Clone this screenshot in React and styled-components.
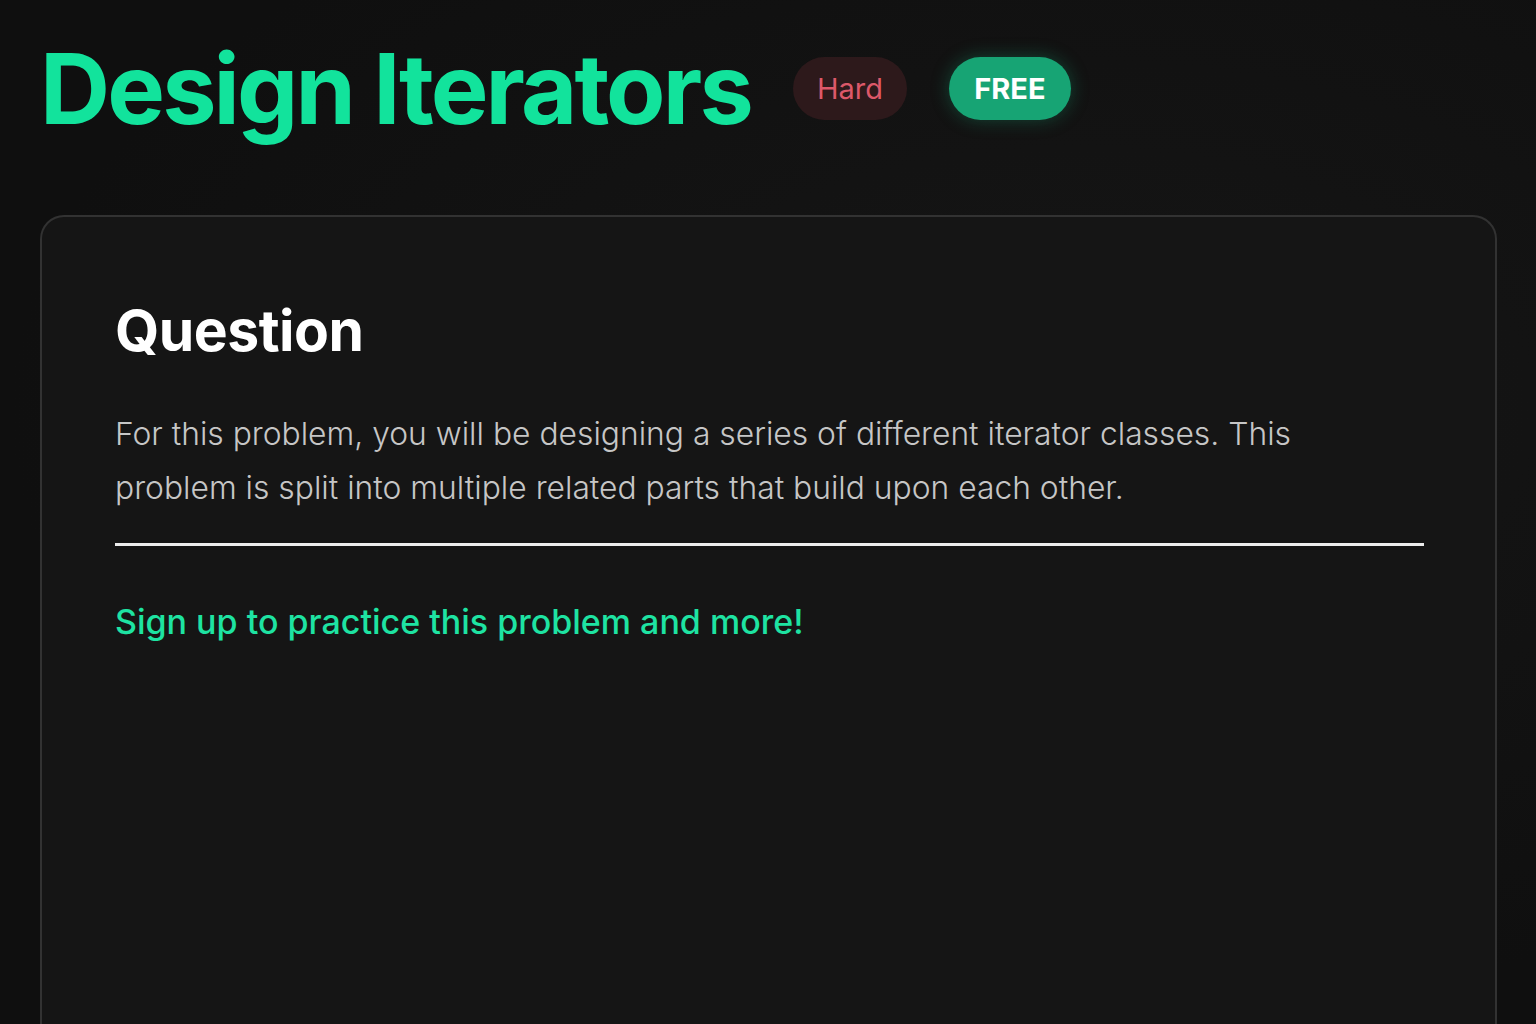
import React from "react";
import styled, { createGlobalStyle } from "styled-components";

const GlobalStyle = createGlobalStyle`
  html, body {
    margin: 0;
    padding: 0;
    background: #0f0f0f;
    font-family: Inter, "Noto Sans", "Liberation Sans", sans-serif;
  }
`;

const Page = styled.div`
  height: 1024px;
  overflow: hidden;
  padding: 30px 39px 0 40px;
  box-sizing: border-box;
  background: radial-gradient(ellipse at 70% 40%, #161616 0%, #0f0f0f 70%);
`;

const Header = styled.div`
  display: flex;
  align-items: center;
  gap: 42px;
  height: 116px;
`;

const Title = styled.h1`
  margin: 0;
  font-size: 97px;
  font-weight: 700;
  letter-spacing: -2.85px;
  color: #12e39c;
  line-height: 1;
`;

const Badge = styled.span`
  display: inline-flex;
  align-items: center;
  justify-content: center;
  box-sizing: border-box;
  height: 63px;
  width: ${(p) => p.$width}px;
  border-radius: 32px;
  font-size: 29px;
  font-weight: ${(p) => p.$weight};
  color: ${(p) => p.$color};
  background: ${(p) => p.$bg};
  box-shadow: ${(p) => p.$glow || "none"};
`;

const Badges = styled.div`
  display: flex;
  align-items: center;
  gap: 42px;
`;

const Card = styled.section`
  margin-top: 69px;
  min-height: 900px;
  border: 2px solid #323232;
  border-bottom: none;
  border-radius: 24px 24px 0 0;
  background: #151515;
  padding: 80px 71px 0 73px;
`;

const Heading = styled.h2`
  margin: 0;
  font-size: 57px;
  font-weight: 700;
  color: #ffffff;
  line-height: 1.2;
  letter-spacing: -0.5px;
`;

const Body = styled.p`
  margin: 42px 0 0;
  font-size: 31.8px;
  font-weight: 300;
  line-height: 54px;
  color: #c6c6c6;
  max-width: 1220px;
`;

const Divider = styled.hr`
  margin: 28px 0 0;
  border: none;
  height: 3px;
  background: #ececec;
`;

const SignUp = styled.a`
  display: block;
  margin-top: 55px;
  font-size: 34px;
  font-weight: 500;
  color: #1ee3a2;
  text-decoration: none;
  cursor: pointer;
`;

export default function App() {
  return (
    <>
      <GlobalStyle />
      <Page>
        <Header>
          <Title>Design Iterators</Title>
          <Badges>
            <Badge $width={114} $weight={400} $color="#dc5869" $bg="#2d191b">
              Hard
            </Badge>
            <Badge
              $width={122}
              $weight={700}
              $color="#ffffff"
              $bg="#17a474"
              $glow="0 0 18px rgba(23,166,118,0.35)"
            >
              FREE
            </Badge>
          </Badges>
        </Header>
        <Card>
          <Heading>Question</Heading>
          <Body>
            For this problem, you will be designing a series of different
            iterator classes. This problem is split into multiple related parts
            that build upon each other.
          </Body>
          <Divider />
          <SignUp>Sign up to practice this problem and more!</SignUp>
        </Card>
      </Page>
    </>
  );
}
